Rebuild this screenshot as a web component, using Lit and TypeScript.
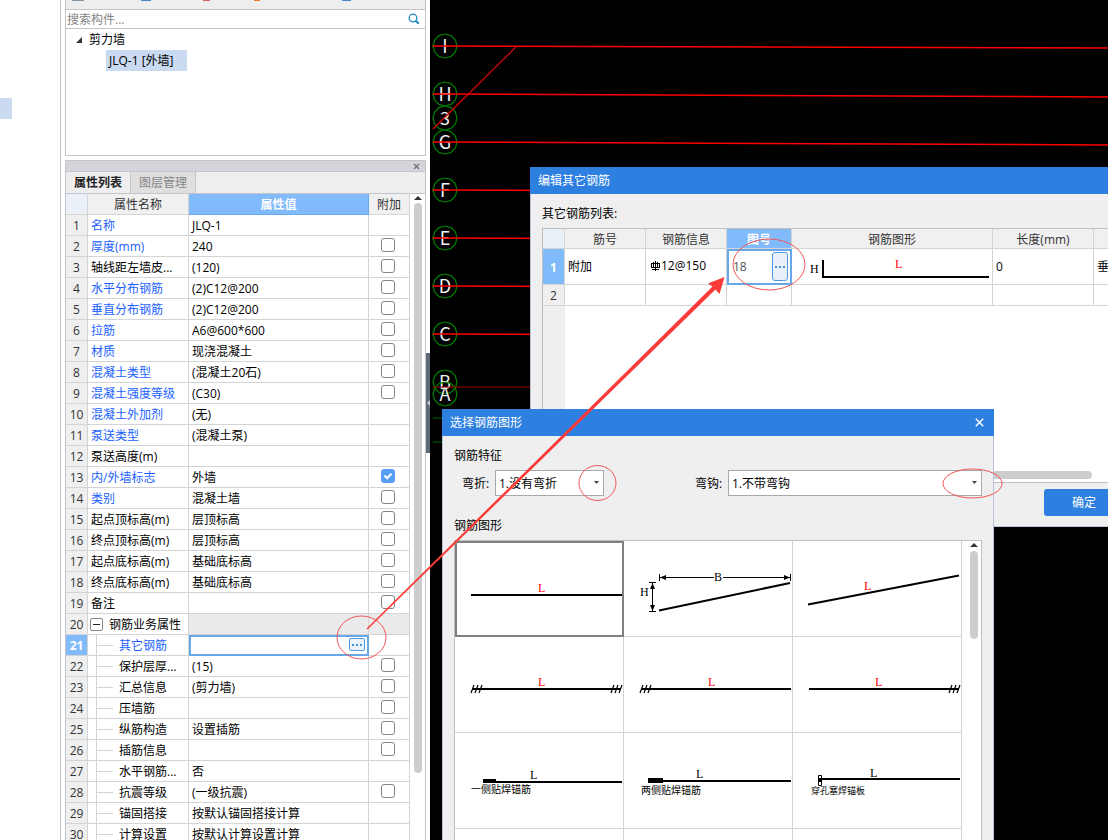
import { LitElement, html, svg, css, nothing } from "lit";
import { customElement } from "lit/decorators.js";
import { classMap } from "lit/directives/class-map.js";

const FONT = css`12px/20px "Open Sans", "Noto Sans CJK SC", sans-serif`;

interface Prop {
  name: string;
  value?: string;
  link?: boolean;
  box?: boolean;
  checked?: boolean;
  kind?: "group" | "child";
  active?: boolean;
}

const PROPS: Prop[] = [
  { name: "名称", value: "JLQ-1", link: true },
  { name: "厚度(mm)", value: "240", link: true, box: true },
  { name: "轴线距左墙皮...", value: "(120)", box: true },
  { name: "水平分布钢筋", value: "(2)C12@200", link: true, box: true },
  { name: "垂直分布钢筋", value: "(2)C12@200", link: true, box: true },
  { name: "拉筋", value: "A6@600*600", link: true, box: true },
  { name: "材质", value: "现浇混凝土", link: true, box: true },
  { name: "混凝土类型", value: "(混凝土20石)", link: true, box: true },
  { name: "混凝土强度等级", value: "(C30)", link: true, box: true },
  { name: "混凝土外加剂", value: "(无)", link: true },
  { name: "泵送类型", value: "(混凝土泵)", link: true },
  { name: "泵送高度(m)" },
  { name: "内/外墙标志", value: "外墙", link: true, box: true, checked: true },
  { name: "类别", value: "混凝土墙", link: true, box: true },
  { name: "起点顶标高(m)", value: "层顶标高", box: true },
  { name: "终点顶标高(m)", value: "层顶标高", box: true },
  { name: "起点底标高(m)", value: "基础底标高", box: true },
  { name: "终点底标高(m)", value: "基础底标高", box: true },
  { name: "备注", box: true },
  { name: "钢筋业务属性", kind: "group" },
  { name: "其它钢筋", link: true, kind: "child", active: true },
  { name: "保护层厚...", value: "(15)", box: true, kind: "child" },
  { name: "汇总信息", value: "(剪力墙)", box: true, kind: "child" },
  { name: "压墙筋", box: true, kind: "child" },
  { name: "纵筋构造", value: "设置插筋", box: true, kind: "child" },
  { name: "插筋信息", box: true, kind: "child" },
  { name: "水平钢筋...", value: "否", kind: "child" },
  { name: "抗震等级", value: "(一级抗震)", box: true, kind: "child" },
  { name: "锚固搭接", value: "按默认锚固搭接计算", kind: "child" },
  { name: "计算设置", value: "按默认计算设置计算", kind: "child" },
];

const dots = html`<svg width="12" height="4" viewBox="0 0 12 4" aria-hidden="true">
  <path d="M1 1h2v2h-2zM5 1h2v2h-2zM9 1h2v2h-2z" fill="#4292dc" />
</svg>`;

/* Component tree and property grid on the left. */
@customElement("property-panel")
class PropertyPanel extends LitElement {
  static styles = css`
    :host { display: flex; flex-direction: column; height: 100%; font: ${FONT}; color: #000; }
    * { box-sizing: border-box; }
    .components { border: 1px solid #c3c5ca; border-top: 0; background: #fff; height: 156px; flex: none; }
    .tools { height: 10px; background: #eee; border-bottom: 1px solid #c3c5ca; }
    .tools svg { display: block; }
    .search { display: flex; align-items: center; height: 19px; border-bottom: 1px solid #c3c5ca; padding: 0 5px 0 1px; }
    .search input { flex: 1; min-width: 0; border: 0; outline: 0; padding: 2px 0 0; font: inherit; height: 18px; background: none; }
    .search input::placeholder { color: #858585; opacity: 1; }
    .search button { border: 0; padding: 0; background: none; height: 12px; }
    .search svg { display: block; }
    .tree, .tree ul { list-style: none; margin: 0; padding: 0; }
    .tree { padding-left: 10px; }
    .node { display: flex; align-items: center; gap: 7px; height: 21px; }
    .tree .leaf { display: block; width: 81px; margin-left: 30px; padding: 1px 3px 0; height: 21px; background: #c9daf1; }
    .sheet { flex: 1; min-height: 0; margin-top: 4px; border: 1px solid #c3c5ca; border-bottom: 0; display: flex; flex-direction: column; }
    .grip { height: 11px; flex: none; background: #d3d5da; border-bottom: 1px solid #c3c5ca; display: flex; justify-content: flex-end; align-items: center; padding-right: 5px; }
    .grip button { border: 0; background: none; padding: 0; height: 7px; display: flex; }
    .tabs { height: 22px; flex: none; background: #eee; border-bottom: 1px solid #c3c5ca; display: flex; }
    .tab { border: 0; border-right: 1px solid #c3c5ca; background: #eee; font: inherit; width: 65px; padding: 0; text-align: center; color: #222; font-weight: bold; }
    .tab.off { background: #dfdfdf; color: #858585; font-weight: normal; }
    .scroll { flex: 1; min-height: 0; display: flex; background: #fff; overflow: hidden; }
    table { border-collapse: separate; border-spacing: 0; table-layout: fixed; flex: 1; width: 0; align-self: flex-start; }
    .c-num { width: 22px; }
    .c-name { width: 101px; }
    .c-box { width: 41px; }
    th, td { height: 21px; padding: 2px 0 0; line-height: 18px; border-right: 1px solid #d4d4d4; border-bottom: 1px solid #d4d4d4; font-weight: normal; white-space: nowrap; overflow: hidden; }
    thead th { background: #f0f0f0; color: #333; }
    thead .corner { background: #eaf0f8; }
    thead .on { background: #82bbfb; color: #fff; font-weight: bold; border-color: #68a8ec; }
    tbody th { background: #efefef; color: #333; text-align: center; }
    tbody .name { text-align: left; padding-left: 3px; }
    tbody .val { padding-left: 3px; }
    .link { color: #1a5fff; }
    .picked th { background: #82bbfb; color: #fff; font-weight: bold; }
    .picked .val { padding: 0 3px; outline: 2px solid #68a8e8; outline-offset: -2px; }
    .edit { display: flex; align-items: center; height: 20px; padding-bottom: 1px; }
    .edit input { flex: 1; min-width: 0; border: 0; outline: 0; padding: 0; font: inherit; height: 16px; }
    .edit button { width: 16px; height: 13px; border: 1px solid #4d9ae4; border-radius: 2px; padding: 0; background: #edf3fb; display: flex; align-items: center; justify-content: center; }
    .group .val, .group .mark { background: #ebebeb; }
    .group .name { padding: 0 0 0 2px; }
    .group .fold { display: flex; align-items: center; gap: 6px; height: 20px; }
    .fold span { padding-top: 2px; }
    .fold button { width: 13px; height: 13px; border: 1px solid #888; border-radius: 2px; background: #fff; padding: 0; display: flex; align-items: center; justify-content: center; }
    .child .name { padding: 0 0 0 8px; }
    .branch { display: flex; align-items: center; height: 21px; border-left: 1px solid #d4d4d4; gap: 6px; margin-bottom: -1px; }
    .branch::before { content: ""; width: 16px; height: 1px; background: #d4d4d4; }
    .mark { padding: 0 0 0 12px; }
    .mark input { appearance: none; display: block; width: 14px; height: 14px; margin: 0 0 2px; border: 1px solid #858585; border-radius: 3px; background: #fff; }
    .mark input:checked { border-color: #549ff5; background: #549ff5 url("data:image/svg+xml,%3Csvg xmlns='http://www.w3.org/2000/svg' viewBox='0 0 12 12'%3E%3Cpath d='M2.5 5.5l2.7 2.7 4.3-4.6' fill='none' stroke='white' stroke-width='2'/%3E%3C/svg%3E") center / 12px no-repeat; }
    .track { width: 15px; flex: none; display: flex; flex-direction: column; align-items: center; padding: 2px 1px 0; gap: 3px; }
    .track svg { display: block; }
    .thumb { width: 8px; height: 570px; border-radius: 4px; background: #cdcdcd; }
  `;

  private nameCell(p: Prop) {
    const text = html`<span class=${classMap({ link: !!p.link })}>${p.name}</span>`;
    if (p.kind === "group")
      return html`<div class="fold">
        <button type="button" aria-expanded="true">
          <svg width="7" height="1" aria-hidden="true"><rect width="7" height="1" fill="#222" /></svg>
        </button>${text}
      </div>`;
    return p.kind === "child" ? html`<div class="branch">${text}</div>` : text;
  }

  render() {
    return html`
      <section class="components">
        <div class="tools">
          <svg width="359" height="1" aria-hidden="true">
            <rect x="6" width="12" height="1" fill="#8494a0" /><rect x="75" width="10" height="1" fill="#4a86d8" />
            <rect x="137" width="7" height="1" fill="#d86060" /><rect x="188" width="6" height="1" fill="#f07820" />
            <rect x="276" width="9" height="1" fill="#4a86d8" />
          </svg>
        </div>
        <div class="search">
          <input type="search" placeholder="搜索构件..." aria-label="搜索构件" />
          <button type="button" aria-label="搜索">
            <svg width="12" height="12" viewBox="0 0 12 12" fill="none" stroke="#2588c4">
              <circle cx="5" cy="5" r="3.8" stroke-width="1.3" /><path d="M7.8 7.8l3 3" stroke-width="2" />
            </svg>
          </button>
        </div>
        <ul class="tree">
          <li>
            <span class="node"><svg width="6" height="6" aria-hidden="true"><path d="M6 0v6H0z" fill="#333" /></svg>剪力墙</span>
            <ul><li class="leaf">JLQ-1 [外墙]</li></ul>
          </li>
        </ul>
      </section>
      <section class="sheet">
        <div class="grip">
          <button type="button" aria-label="关闭">
            <svg width="7" height="7" viewBox="0 0 7 7"><path d="M1 1l5 5M6 1l-5 5" stroke="#777" stroke-width="1.4" /></svg>
          </button>
        </div>
        <div class="tabs" role="tablist">
          <button class="tab" role="tab" aria-selected="true">属性列表</button>
          <button class="tab off" role="tab" aria-selected="false">图层管理</button>
        </div>
        <div class="scroll">
          <table>
            <colgroup><col class="c-num" /><col class="c-name" /><col /><col class="c-box" /></colgroup>
            <thead><tr><th class="corner"></th><th>属性名称</th><th class="on">属性值</th><th>附加</th></tr></thead>
            <tbody>
              ${PROPS.map(
                (p, i) => html`<tr class=${classMap({ picked: !!p.active, group: p.kind === "group", child: p.kind === "child" })}>
                  <th>${i + 1}</th>
                  <td class="name">${this.nameCell(p)}</td>
                  <td class="val">${p.active
                    ? html`<div class="edit"><input type="text" aria-label=${p.name} /><button type="button" aria-label="更多">${dots}</button></div>`
                    : p.value ?? nothing}</td>
                  <td class="mark">${p.box ? html`<input type="checkbox" aria-label=${p.name} ?checked=${!!p.checked} />` : nothing}</td>
                </tr>`
              )}
            </tbody>
          </table>
          <div class="track">
            <svg width="8" height="4" aria-hidden="true"><path d="M0 4l4-4 4 4z" fill="#333" /></svg>
            <div class="thumb"></div>
          </div>
        </div>
      </section>
    `;
  }
}

const AXES: [string, number][] = [
  ["I", 46], ["H", 94], ["3", 118], ["G", 142], ["F", 190], ["E", 238],
  ["D", 286], ["C", 334], ["B", 382], ["A", 394],
];
const AXIS_LINES: [number, number][] = [
  [46, 48], [94, 97], [142, 145], [190, 193], [238, 240], [286, 288], [334, 336],
];
const ring = (y: number) =>
  Array.from({ length: 12 }, (_, i) => {
    const a = (i * Math.PI) / 6;
    return `${(15 + 12 * Math.cos(a)).toFixed(1)},${(y + 12 * Math.sin(a)).toFixed(1)}`;
  }).join(" ");

/* Black drawing surface with grid axes. */
@customElement("axis-canvas")
class AxisCanvas extends LitElement {
  static styles = css`
    :host { display: block; height: 100%; background: #000; }
    svg { display: block; }
    .axis { stroke: #f00; stroke-width: 1.5; }
    .dim { stroke: #900; stroke-width: 1; }
    .ring { fill: none; stroke: #008000; stroke-width: 1.2; }
    text { font: 18px "Noto Sans CJK SC", sans-serif; fill: #f4f4f4; text-anchor: middle; }
  `;
  render() {
    return html`<svg width="100%" height="100%">
      ${AXES.map(([t, y]) => svg`<polygon class="ring" points=${ring(y)} /><text x="15" y=${y + 7}>${t}</text>`)}
      ${AXIS_LINES.map(([a, b]) => svg`<line class="axis" x1="3" y1=${a} x2="100%" y2=${b} />`)}
      <line class="dim" x1="3" y1="387" x2="100%" y2="387" />
      <path d="M3 129L86 47" stroke="#d80000" stroke-width="1.3" fill="none" />
      <path d="M3 418h300M3 442h300" stroke="#006400" fill="none" />
    </svg>`;
  }
}

/* Dialog listing the extra bars. */
@customElement("bar-list-dialog")
class BarListDialog extends LitElement {
  static styles = css`
    :host { display: flex; flex-direction: column; font: ${FONT}; color: #000; background: #efefef; }
    * { box-sizing: border-box; }
    .title { height: 27px; flex: none; margin: 0; padding: 0 8px; background: #2d7fe0; color: #fff; font: inherit; line-height: 28px; }
    .body { flex: 1; min-height: 0; display: flex; flex-direction: column; padding: 10px 11px 10px; border: 1px solid #b9c5d6; border-top: 0; }
    .caption { margin: 0 0 4px; }
    .frame { flex: 1; display: flex; flex-direction: column; border: 1px solid #bfbfbf; background: linear-gradient(to right, #efefef 22px, #fff 22px); }
    table { width: 100%; border-collapse: separate; border-spacing: 0; table-layout: fixed; background: #fff; }
    .c-num { width: 22px; }
    .c-mid { width: 81px; }
    .c-no { width: 65px; }
    .c-shape { width: 201px; }
    .c-len { width: 101px; }
    th, td { padding: 0; border-right: 1px solid #d4d4d4; border-bottom: 1px solid #d4d4d4; font-weight: normal; white-space: nowrap; overflow: hidden; text-align: left; }
    thead th { height: 20px; background: #f0f0f0; color: #333; padding-top: 2px; line-height: 17px; text-align: center; }
    thead .corner { background: #eaf0f8; }
    thead .on { background: #82bbfb; color: #fff; font-weight: bold; }
    tbody th { text-align: center; background: #efefef; color: #333; }
    tbody td { padding: 0 3px; }
    .first th, .first td { height: 36px; }
    .first th { background: #82bbfb; color: #fff; font-weight: bold; padding-top: 2px; }
    .second th, .second td { height: 21px; padding-top: 2px; line-height: 18px; }
    .info { display: flex; align-items: center; gap: 1px; padding: 0 0 2px 2px; }
    tbody .no { padding: 0 3px 0 6px; outline: 2px solid #68a8e8; outline-offset: -2px; }
    .edit { display: flex; align-items: center; }
    .edit input { flex: 1; width: 0; min-width: 0; border: 0; outline: 0; padding: 0; font: inherit; color: #555; background: none; }
    .edit button { width: 16px; height: 29px; border: 1px solid #4d9ae4; border-radius: 3px; padding: 0; background: #e9f0f9; display: flex; align-items: center; justify-content: center; }
    tbody .shape { padding: 0; }
    .shape svg { display: block; }
    .shape text { font: 12px "Liberation Serif", serif; }
    .thumb { height: 8px; margin: auto 35px 3px 60px; border-radius: 4px; background: #cdcdcd; }
    .foot { display: flex; justify-content: flex-end; padding: 6px 4px 0; }
    .ok { width: 80px; height: 27px; border: 0; border-radius: 3px; background: #2d7fe0; color: #fff; padding: 1px 0 0; font: inherit; }
  `;
  render() {
    return html`
      <h2 class="title">编辑其它钢筋</h2>
      <div class="body">
        <p class="caption">其它钢筋列表:</p>
        <div class="frame">
          <table>
            <colgroup>
              <col class="c-num" /><col class="c-mid" /><col class="c-mid" /><col class="c-no" />
              <col class="c-shape" /><col class="c-len" /><col />
            </colgroup>
            <thead>
              <tr><th class="corner"></th><th>筋号</th><th>钢筋信息</th><th class="on">图号</th><th>钢筋图形</th><th>长度(mm)</th><th></th></tr>
            </thead>
            <tbody>
              <tr class="first">
                <th>1</th>
                <td>附加</td>
                <td><div class="info">
                  <svg width="9" height="10" viewBox="0 0 9 10" fill="none" stroke="#000" aria-hidden="true">
                    <path d="M4.5 0v10M2.5 1v6M6.5 1v6M1 8.500h7M0 2.500h9M0 6.500h9M.5 3v3M8.500 3v3" />
                  </svg><span>12@150</span>
                </div></td>
                <td class="no"><div class="edit"><input type="text" aria-label="图号" value="18" /><button type="button" aria-label="更多">${dots}</button></div></td>
                <td class="shape">
                  <svg width="200" height="35" aria-hidden="true">
                    <text x="18" y="24">H</text><text x="103" y="19" fill="#f00">L</text>
                    <path d="M31 11v17h166" fill="none" stroke="#000" stroke-width="2" />
                  </svg>
                </td>
                <td>0</td>
                <td>垂</td>
              </tr>
              <tr class="second"><th>2</th><td></td><td></td><td></td><td></td><td></td><td></td></tr>
            </tbody>
          </table>
          <div class="thumb"></div>
        </div>
        <div class="foot"><button class="ok" type="button">确定</button></div>
      </div>
    `;
  }
}

const hatch = (x: number) =>
  svg`<path d="M${x} 56l3-8M${x + 4} 56l3-8M${x + 8} 56l3-8" stroke="#000" stroke-width="1.2" />`;

const SHAPES = [
  svg`<path class="bar" d="M16 54H167" /><text class="red" x="83" y="51">L</text>`,
  svg`<path class="thin" d="M35.5 33v7M166.5 33v7M36 36.5H90M99 36.5H166M25 41.5h7M25 70.5h7M28.5 42v28" />
    <path d="M36 36.5l6-2.5v5zM166 36.5l-6-2.5v5zM28.5 42l-2.5 6h5zM28.5 70l-2.5-6h5z" />
    <path class="bar" d="M35 69.5L166 42" /><text x="90" y="40">B</text><text x="16" y="55">H</text>`,
  svg`<path class="bar" d="M15 63.5L166 34.5" /><text class="red" x="71" y="49">L</text>`,
  svg`<path class="bar" d="M18 52H166" />${hatch(16)}${hatch(156)}<text class="red" x="83" y="49">L</text>`,
  svg`<path class="bar" d="M18 52H167" />${hatch(16)}<text class="red" x="84" y="49">L</text>`,
  svg`<path class="bar" d="M16 52H166" />${hatch(156)}<text class="red" x="82" y="49">L</text>`,
  svg`<path class="bar" d="M28 49H167" /><path d="M28 46h13v4H28z" /><text x="75" y="46">L</text><text class="note" x="16" y="60">一侧贴焊锚筋</text>`,
  svg`<path class="bar" d="M24 48H167" /><path d="M24 45h15v5H24z" /><text x="72" y="45">L</text><text class="note" x="17" y="61">两侧贴焊锚筋</text>`,
  svg`<path class="bar" d="M27 46H167" /><path class="thin" d="M25.5 42.5h3v10h-3z" /><path d="M25 45h4v4h-4z" /><text x="77" y="44">L</text><text class="note small" x="18" y="61">穿孔塞焊锚板</text>`,
  nothing, nothing, nothing,
];

/* Dialog for picking a bar shape. */
@customElement("shape-dialog")
class ShapeDialog extends LitElement {
  static styles = css`
    :host { display: flex; flex-direction: column; font: ${FONT}; color: #000; background: #efefef; overflow: hidden; }
    * { box-sizing: border-box; }
    .title { height: 27px; flex: none; display: flex; align-items: center; justify-content: space-between; padding: 0 10px 0 8px; background: #2d7fe0; color: #fff; }
    h2, h3 { margin: 0; font: inherit; }
    .title button { border: 0; background: none; padding: 0; display: flex; }
    .body { flex: 1; min-height: 0; display: flex; flex-direction: column; padding: 10px 11px 0; border: 1px solid #b9c5d6; border-width: 0 1px; }
    .fields { display: grid; grid-template-columns: 233px 1fr; margin: 4px 0 20px; padding-left: 8px; }
    .field { display: grid; grid-template-columns: 33px 1fr; align-items: center; }
    .field label { padding-top: 2px; }
    .short { width: 142px; }
    .pick { display: grid; }
    .pick > * { grid-area: 1 / 1; }
    .pick svg { justify-self: end; align-self: center; margin-right: 4px; pointer-events: none; }
    select { appearance: none; width: 100%; height: 26px; border: 1px solid #a8a8a8; border-radius: 0; background: #fff; padding: 2px 3px 0; font: inherit; color: #000; }
    .frame { flex: 1; min-height: 0; margin-top: 4px; display: flex; border: 1px solid #bfbfbf; border-bottom: 0; background: #fff; overflow: hidden; }
    .grid { flex: 1; display: grid; grid-template-columns: repeat(3, 1fr); grid-auto-rows: 96px; }
    .cell { border: 0; border-right: 1px solid #d4d4d4; border-bottom: 1px solid #d4d4d4; border-radius: 0; padding: 0; background: #fff; text-align: left; overflow: hidden; }
    .cell.on { outline: 2px solid #808080; outline-offset: -2px; }
    .cell svg { display: block; }
    .bar { fill: none; stroke: #000; stroke-width: 2; }
    .thin { fill: none; stroke: #000; stroke-width: 1; }
    .cell text { font: 12px "Liberation Serif", serif; }
    .cell .red { fill: #f00; }
    .cell .note { font: 10px "Noto Sans CJK SC", sans-serif; }
    .cell .small { font-size: 9px; }
    .track { width: 19px; flex: none; display: flex; flex-direction: column; align-items: center; gap: 4px; padding: 2px 0 0 5px; }
    .thumb { width: 8px; height: 88px; border-radius: 4px; background: #cdcdcd; }
  `;
  render() {
    const arrow = html`<svg width="7" height="4" viewBox="0 0 7 4" aria-hidden="true"><path d="M1 0h5L3.500 3z" fill="#444" /></svg>`;
    return html`
      <div class="title">
        <h2>选择钢筋图形</h2>
        <button type="button" aria-label="关闭">
          <svg width="9" height="9" viewBox="0 0 9 9"><path d="M.8.8l7.4 7.4M8.2.8L.8 8.2" stroke="#fff" stroke-width="1.5" /></svg>
        </button>
      </div>
      <div class="body">
        <h3>钢筋特征</h3>
        <div class="fields">
          <div class="field short">
            <label for="bend">弯折:</label>
            <span class="pick"><select id="bend"><option>1.没有弯折</option></select>${arrow}</span>
          </div>
          <div class="field">
            <label for="hook">弯钩:</label>
            <span class="pick"><select id="hook"><option>1.不带弯钩</option></select>${arrow}</span>
          </div>
        </div>
        <h3>钢筋图形</h3>
        <div class="frame">
          <div class="grid">
            ${SHAPES.map(
              (s, i) => html`<button type="button" class=${classMap({ cell: true, on: i === 0 })}>
                <svg width="168" height="95">${s}</svg>
              </button>`
            )}
          </div>
          <div class="track">
            <svg width="8" height="4" viewBox="0 0 8 4"><path d="M0 4l4-4 4 4z" fill="#333" /></svg>
            <div class="thumb"></div>
          </div>
        </div>
      </div>
    `;
  }
}

@customElement("app-root")
class AppRoot extends LitElement {
  static styles = css`
    :host { display: block; position: relative; height: 100vh; overflow: hidden; background: #fff; }
    .shell { display: flex; height: 100%; }
    .nav { flex: 0 0 61px; box-sizing: border-box; border-right: 1px solid #c3c5ca; padding-top: 98px; }
    .nav-item { width: 12px; height: 21px; background: #c9daf1; }
    .panel { flex: 0 0 361px; margin-left: 4px; }
    .split { flex: 0 0 4px; padding-top: 353px; }
    .handle { display: flex; align-items: center; width: 4px; height: 100px; border: 0; padding: 0; background: #5f6b78; }
    .work { flex: 1; min-width: 0; position: relative; overflow: hidden; }
    .list { position: absolute; left: 100px; top: 167px; width: 610px; height: 360px; }
    .shapes { position: absolute; left: 12px; top: 409px; bottom: 0; width: 552px; }
    .ink { position: absolute; inset: 0; width: 100%; height: 100%; pointer-events: none; }
  `;
  render() {
    return html`
      <div class="shell">
        <nav class="nav"><div class="nav-item"></div></nav>
        <property-panel class="panel"></property-panel>
        <div class="split">
          <button class="handle" type="button" aria-label="收起">
            <svg width="4" height="6" viewBox="0 0 4 6"><path d="M4 0v6L1 3z" fill="#c8ced4" /></svg>
          </button>
        </div>
        <main class="work">
          <axis-canvas></axis-canvas>
          <bar-list-dialog class="list"></bar-list-dialog>
          <shape-dialog class="shapes"></shape-dialog>
        </main>
      </div>
      <svg class="ink" aria-hidden="true">
        <g fill="none" stroke="#f25555">
          <ellipse cx="361.5" cy="637.5" rx="24.5" ry="21.5" /><ellipse cx="769" cy="264.5" rx="36" ry="25.5" />
          <ellipse cx="597.5" cy="483" rx="18.5" ry="17.5" /><ellipse cx="972.5" cy="483.5" rx="29.5" ry="14.5" />
        </g>
        <path d="M366.5 628.5L712.5 286.5 708 283.500 724.5 277 719.500 294 715.500 289.500 367.5 629.5z" fill="#fb3a3a" />
      </svg>
    `;
  }
}
